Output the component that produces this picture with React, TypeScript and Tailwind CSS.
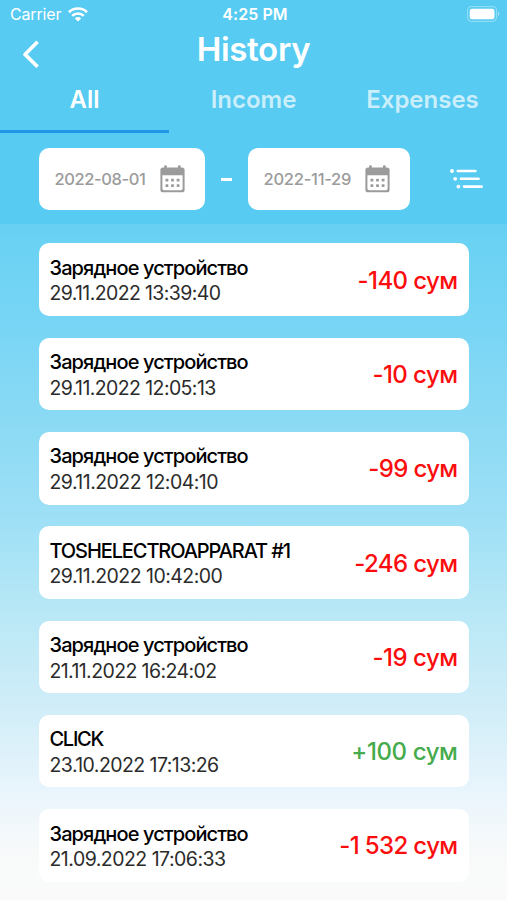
import clsx from 'clsx';

interface Transaction {
  name: string;
  date: string;
  amount: string;
  income?: boolean;
  nameTracking: string;
  dateTracking: string;
  amountTracking: string;
}

const DEVICE = 'Зарядное устройство';

const transactions: Transaction[] = [
  { name: DEVICE, date: '29.11.2022 13:39:40', amount: '-140 сум', nameTracking: 'tracking-[-0.9px]', dateTracking: 'tracking-[-0.62px]', amountTracking: 'tracking-[-0.6px]' },
  { name: DEVICE, date: '29.11.2022 12:05:13', amount: '-10 сум', nameTracking: 'tracking-[-0.9px]', dateTracking: 'tracking-[-0.6px]', amountTracking: 'tracking-[-0.55px]' },
  { name: DEVICE, date: '29.11.2022 12:04:10', amount: '-99 сум', nameTracking: 'tracking-[-0.9px]', dateTracking: 'tracking-[-0.53px]', amountTracking: 'tracking-[-0.65px]' },
  { name: 'TOSHELECTROAPPARAT #1', date: '29.11.2022 10:42:00', amount: '-246 сум', nameTracking: 'tracking-[-1.1px]', dateTracking: 'tracking-[-0.53px]', amountTracking: 'tracking-[-0.6px]' },
  { name: DEVICE, date: '21.11.2022 16:24:02', amount: '-19 сум', nameTracking: 'tracking-[-0.9px]', dateTracking: 'tracking-[-0.6px]', amountTracking: 'tracking-[-0.5px]' },
  { name: 'CLICK', date: '23.10.2022 17:13:26', amount: '+100 сум', income: true, nameTracking: 'tracking-[-1.3px]', dateTracking: 'tracking-[-0.56px]', amountTracking: 'tracking-[-0.4px]' },
  { name: DEVICE, date: '21.09.2022 17:06:33', amount: '-1 532 сум', nameTracking: 'tracking-[-0.9px]', dateTracking: 'tracking-[-0.52px]', amountTracking: 'tracking-[-0.63px]' },
];

function WifiIcon() {
  return (
    <svg width="20" height="15" viewBox="0 0 20 15" fill="none" stroke="white" strokeWidth="2.7">
      <path d="M1 5.2a12.8 12.8 0 0 1 18 0" />
      <path d="M4.2 8.9a8.2 8.2 0 0 1 11.6 0" />
      <path d="M10 14.6l-3.2-3.2a4.6 4.6 0 0 1 6.4 0z" fill="white" stroke="none" />
    </svg>
  );
}

function CalendarIcon() {
  return (
    <svg width="25" height="28" viewBox="0 0 25 28" fill="#9b9b9b">
      <rect x="4.2" y="0.3" width="2.6" height="5" rx="1" />
      <rect x="18" y="0.3" width="2.6" height="5" rx="1" />
      <path fillRule="evenodd" d="M3 2.4h19a2.6 2.6 0 0 1 2.6 2.6v19.7a2.6 2.6 0 0 1-2.6 2.6H3a2.6 2.6 0 0 1-2.6-2.6V5A2.6 2.6 0 0 1 3 2.4zM2.4 10.3v13.2a1.7 1.7 0 0 0 1.7 1.7h16.8a1.7 1.7 0 0 0 1.7-1.7V10.3z" />
      {[5.5, 11.1, 16.7].map((x) => (
        <g key={x}>
          <rect x={x} y="13.8" width="2.8" height="2.8" rx="0.5" />
          <rect x={x} y="19.3" width="2.8" height="2.8" rx="0.5" />
        </g>
      ))}
    </svg>
  );
}

function FilterIcon() {
  return (
    <svg width="33" height="20" viewBox="0 0 33 20" fill="white">
      <circle cx="2" cy="2" r="1.9" />
      <rect x="6.5" y="0.7" width="20.2" height="2.6" rx="1.3" />
      <circle cx="5.2" cy="9.8" r="1.9" />
      <rect x="9.7" y="8.5" width="20.2" height="2.6" rx="1.3" />
      <circle cx="8.4" cy="17.6" r="1.9" />
      <rect x="12.8" y="16.3" width="20.2" height="2.6" rx="1.3" />
    </svg>
  );
}

function StatusBar() {
  return (
    <div className="grid h-7 grid-cols-3 items-center pr-[7px] pl-2.5 text-[16px] leading-none text-white">
      <div className="flex items-center gap-[7px]">
        <span className="tracking-[-0.15px]">Carrier</span>
        <WifiIcon />
      </div>
      <span className="text-center font-semibold tracking-[0.05px]">4:25 PM</span>
      <svg className="justify-self-end" width="33" height="16" viewBox="0 0 33 16" fill="none">
        <rect x="0.6" y="0.6" width="29" height="14.8" rx="4" stroke="white" strokeOpacity="0.4" />
        <rect x="2.7" y="2.7" width="24.8" height="10.6" rx="2.4" fill="white" />
        <path d="M31 5.8a2.4 2.4 0 0 1 0 4.4z" fill="white" fillOpacity="0.45" />
      </svg>
    </div>
  );
}

function DateField({ value, className }: { value: string; className: string }) {
  return (
    <div className={clsx('flex h-[62px] items-center justify-between rounded-[10px] bg-white pl-4', className)}>
      <span className="pt-px text-[16.5px] font-medium whitespace-nowrap text-[#9b9b9b]">{value}</span>
      <CalendarIcon />
    </div>
  );
}

function TransactionCard({ item }: { item: Transaction }) {
  return (
    <div className="flex h-[72.6px] items-center justify-between rounded-[10px] bg-white px-[11px]">
      <div className="pt-[3.4px] whitespace-nowrap">
        <p className={clsx('text-[20px] leading-[25.5px] font-medium text-black', item.nameTracking)}>{item.name}</p>
        <p className={clsx('text-[19.5px] leading-[25.5px] text-[#2b2b2b]', item.dateTracking)}>{item.date}</p>
      </div>
      <span
        className={clsx(
          'pt-0.5 text-[24px] leading-none font-medium whitespace-nowrap',
          item.income ? 'text-[#46ab4c]' : 'text-[#fb0d0d]',
          item.amountTracking
        )}
      >
        {item.amount}
      </span>
    </div>
  );
}

export default function App() {
  return (
    <div className="flex h-[900px] w-[507px] flex-col overflow-hidden bg-[#fafafa] font-['Inter','Noto_Sans',sans-serif]">
      {/* Header */}
      <header className="h-[224px] shrink-0 bg-[#57cbf2]">
        <StatusBar />
        <div className="grid h-[51px] grid-cols-[80px_1fr_80px]">
          <svg className="mt-3 ml-[22px]" width="18" height="28" viewBox="0 0 18 28" fill="none" stroke="white" strokeWidth="3.6">
            <path d="M15.6 1.8L3 14.4l12.6 12.4" strokeLinejoin="round" />
          </svg>
          <h1 className="text-center text-[33px] leading-[43px] font-semibold tracking-[-0.3px] text-white">History</h1>
        </div>
        <nav className="grid h-[54px] grid-cols-3 text-center text-[24px] leading-[41px] font-semibold text-white">
          <span className="border-b-[3px] border-[#2196e8]">All</span>
          <span className="text-white/70">Income</span>
          <span className="text-white/70">Expenses</span>
        </nav>
        <div className="mt-[15px] flex items-center pr-6 pl-[38.5px]">
          <DateField value="2022-08-01" className="w-[166px] pr-5 tracking-[-0.4px]" />
          <span className="mx-4 h-[3px] w-[11px] bg-white" />
          <DateField value="2022-11-29" className="w-[162px] pr-5 tracking-[-0.25px]" />
          <div className="ml-auto">
            <FilterIcon />
          </div>
        </div>
      </header>

      {/* Transactions */}
      <main className="flex flex-1 flex-col gap-[21.7px] bg-[linear-gradient(180deg,#67d1f3_0px,#78d5f5_100px,#8bdaf4_200px,#9fe0f6_300px,#b9e8f6_390px,#cfedf8_480px,#eaf5fc_570px,#f8fafa_630px,#fafafa_676px)] px-[38.5px] pt-[19.4px]">
        {transactions.map((item) => (
          <TransactionCard key={item.date} item={item} />
        ))}
      </main>
    </div>
  );
}
